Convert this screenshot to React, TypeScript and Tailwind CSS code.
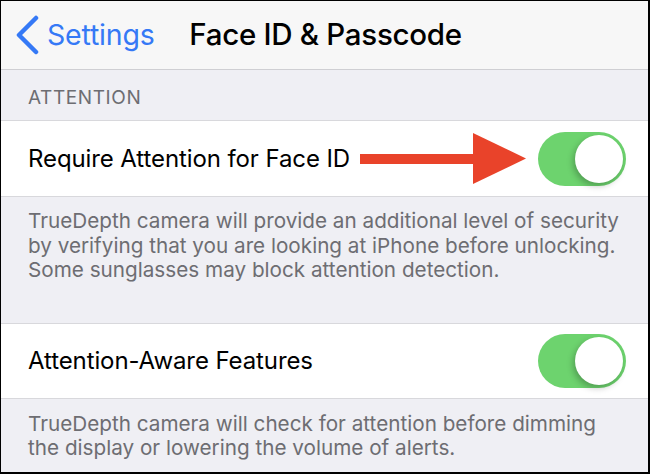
import React from "react";

const font = { fontFamily: "Inter, 'Noto Sans', sans-serif" };

function Toggle() {
  return (
    <div className="w-[88px] h-[54px] rounded-full bg-[#6dd36e] flex items-center justify-end pr-[3px] shrink-0">
      <div className="w-[48px] h-[48px] rounded-full bg-white shadow-[-2px_3px_6px_rgba(0,0,0,0.25)]" />
    </div>
  );
}

export default function App() {
  return (
    <div
      className="w-[650px] h-[474px] bg-[#efeff4] overflow-hidden flex flex-col border-t border-l border-r-2 border-b-2 border-black"
      style={font}
    >
      <div className="h-[69px] shrink-0 bg-[#f7f7f7] border-b border-[#cfcfd3] grid grid-cols-[1fr_auto_1fr] items-center">
        <div className="flex items-center pl-[14px] text-[#3579f6]">
          <svg width="26" height="40" viewBox="0 0 26 40" className="shrink-0">
            <polyline
              points="21,3 4,20 21,37"
              fill="none"
              stroke="#3579f6"
              strokeWidth="4.5"
              strokeLinecap="round"
              strokeLinejoin="round"
            />
          </svg>
          <span className="ml-[6px] text-[28.5px] leading-none tracking-[-0.2px]">Settings</span>
        </div>
        <div className="text-[29.5px] font-medium text-black leading-none tracking-[-0.3px] pl-[2px]">Face ID &amp; Passcode</div>
        <div />
      </div>

      <div className="h-[50px] shrink-0 flex items-end pb-[13px] pl-[27px] text-[19px] tracking-[0.6px] text-[#6d6d72] leading-none">
        ATTENTION
      </div>

      <div className="h-[77px] shrink-0 bg-white border-y border-[#d8d8dc] flex items-center pl-[27px] pr-[22px]">
        <span className="text-[24px] text-black leading-none tracking-[-0.1px]">Require Attention for Face ID</span>
        <svg width="167" height="51" viewBox="0 0 167 51" className="ml-[10px] shrink-0 mt-[-1px]">
          <rect x="0" y="21" width="116" height="10" fill="#e9432a" />
          <polygon points="113,0 166,25.5 113,51" fill="#e9432a" />
        </svg>
        <div className="ml-auto">
          <Toggle />
        </div>
      </div>

      <div className="h-[126px] shrink-0 pt-[12px] pl-[27px] pr-[16px] text-[20.7px] leading-[24.5px] text-[#6d6d72]">
        TrueDepth camera will provide an additional level of security by verifying that you are looking at iPhone before unlocking. Some sunglasses may block attention detection.
      </div>

      <div className="h-[76px] shrink-0 bg-white border-y border-[#d8d8dc] flex items-center pl-[27px] pr-[22px]">
        <span className="text-[24px] text-black leading-none tracking-[-0.1px]">Attention-Aware Features</span>
        <div className="ml-auto">
          <Toggle />
        </div>
      </div>

      <div className="pt-[13px] pl-[27px] pr-[16px] text-[20.7px] leading-[24px] text-[#6d6d72]">
        TrueDepth camera will check for attention before dimming the display or lowering the volume of alerts.
      </div>
    </div>
  );
}
